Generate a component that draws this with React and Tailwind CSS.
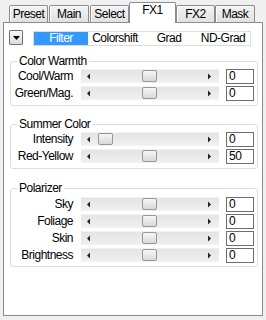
import React from 'react';

const FONT = "font-['Liberation_Sans',Arial,sans-serif]";

const tabs = [
  { name: 'Preset', cls: 'ml-[9px] w-[39px]' },
  { name: 'Main', cls: 'ml-[1px] w-[40px]' },
  { name: 'Select', cls: 'ml-[1px] w-[39px]' },
  { name: 'FX1', active: true, cls: 'w-[47px]' },
  { name: 'FX2', cls: 'w-[39px]' },
  { name: 'Mask', cls: 'w-[40px]' },
];

const modes = ['Filter', 'Colorshift', 'Grad', 'ND-Grad'];

// thumb offset in px from the track's left edge
const Slider = ({ pos }) => (
  <div className="relative w-[138px] h-[14px] bg-gradient-to-b from-[#e4e4e4] to-[#efefef] border-y border-[#f2f2f2]">
    <svg className="absolute left-[6px] top-[3px]" width="4" height="7" viewBox="0 0 4 7">
      <path d="M3 0.5 L3 6.5 L0 3.5 Z" fill="#222" />
    </svg>
    <svg className="absolute right-[7px] top-[3px]" width="4" height="7" viewBox="0 0 4 7">
      <path d="M0 0.5 L0 6.5 L3 3.5 Z" fill="#222" />
    </svg>
    <div
      className="absolute top-0 w-[15px] h-[12px] rounded-[2px] border border-[#979797] bg-gradient-to-b from-[#f6f6f6] to-[#d9d9d9]"
      style={{ left: pos }}
    />
  </div>
);

const Row = ({ label, value, pos, last }) => (
  <div className={`flex items-start ${last ? '' : 'mb-[2px]'}`}>
    <div className="w-[62px] h-[15px] leading-[15px] text-right whitespace-nowrap">{label}</div>
    <div className="ml-[8px]">
      <Slider pos={pos} />
    </div>
    <div className="ml-[7px] w-[28px] h-[15px] border border-[#6e6e6e] bg-white leading-[13px] pl-[2px]">{value}</div>
  </div>
);

const Group = ({ title, children, cls, rowsCls }) => (
  <fieldset className={`ml-[6px] w-[248px] border border-[#d5dfe5] rounded-[3px] ${cls}`}>
    <legend className="ml-[6px] px-[2px] leading-[14px] h-[14px]">{title}</legend>
    <div className={`flex flex-col ${rowsCls}`}>{children}</div>
  </fieldset>
);

export default function App() {
  return (
    <div className={`w-[266px] h-[320px] bg-[#f0f0f0] text-[12px] tracking-[-0.5px] text-black ${FONT}`}>
      <div className="flex items-end h-[22px]">
        {tabs.map((t) =>
          t.active ? (
            <div
              key={t.name}
              className={`${t.cls} relative z-10 h-[21px] -mb-[1px] bg-white border border-b-0 border-[#898c95] rounded-t-[2px] text-center leading-[15px]`}
            >
              {t.name}
            </div>
          ) : (
            <div
              key={t.name}
              className={`${t.cls} h-[17px] bg-gradient-to-b from-[#f3f3f3] to-[#e1e1e1] border border-b-0 border-[#898c95] rounded-t-[2px] text-center leading-[17px] shadow-[inset_1px_1px_0_#fff]`}
            >
              {t.name}
            </div>
          )
        )}
      </div>
      <div className="ml-[3px] w-[260px] h-[294px] bg-white border border-[#898c95]">
        <div className="flex items-start pt-[7px] pl-[5px]">
          <div className="w-[14px] h-[15px] border border-[#6f6f6f] rounded-[1px] bg-gradient-to-b from-[#f7f7f7] to-[#dcdcdc] flex items-center justify-center">
            <svg width="7" height="4" viewBox="0 0 7 4">
              <path d="M0 0 L7 0 L3.5 4 Z" fill="#000" />
            </svg>
          </div>
          <div className="ml-[10px] mt-[1px] w-[218px] h-[15px] border border-[#dcdcdc] flex">
            {modes.map((m, i) => (
              <div
                key={m}
                className={`flex-1 text-center leading-[13px] ${i === 0 ? 'bg-[#3399ff] text-white' : ''}`}
              >
                {m}
              </div>
            ))}
          </div>
        </div>

        <Group title="Color Warmth" cls="mt-[8px] pb-[4px]" rowsCls="mt-[1px]">
          <Row label="Cool/Warm" value="0" pos={61} />
          <Row label="Green/Mag." value="0" pos={61} last />
        </Group>

        <Group title="Summer Color" cls="mt-[11px] pb-[4px]" rowsCls="mt-[1px]">
          <Row label="Intensity" value="0" pos={17} />
          <Row label="Red-Yellow" value="50" pos={61} last />
        </Group>

        <Group title="Polarizer" cls="mt-[12px] pb-[3px]" rowsCls="mt-[2px]">
          <Row label="Sky" value="0" pos={61} />
          <Row label="Foliage" value="0" pos={61} />
          <Row label="Skin" value="0" pos={61} />
          <Row label="Brightness" value="0" pos={61} last />
        </Group>
      </div>
    </div>
  );
}
